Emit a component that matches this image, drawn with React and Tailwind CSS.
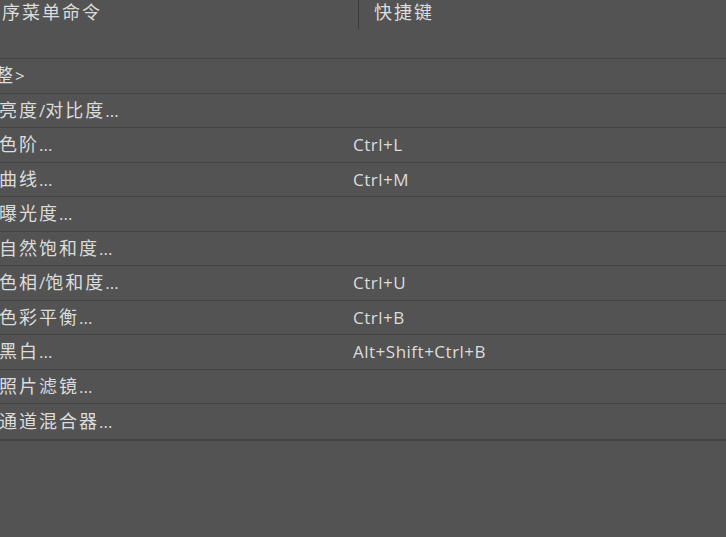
import React from "react";

const rows = [
  { label: "调整>", shortcut: "", group: true },
  { label: "亮度/对比度...", shortcut: "" },
  { label: "色阶...", shortcut: "Ctrl+L" },
  { label: "曲线...", shortcut: "Ctrl+M" },
  { label: "曝光度...", shortcut: "" },
  { label: "自然饱和度...", shortcut: "" },
  { label: "色相/饱和度...", shortcut: "Ctrl+U" },
  { label: "色彩平衡...", shortcut: "Ctrl+B" },
  { label: "黑白...", shortcut: "Alt+Shift+Ctrl+B" },
  { label: "照片滤镜...", shortcut: "" },
  { label: "通道混合器...", shortcut: "" },
];

// CJK runs get wider pitch than latin runs, like the original dialog font
function Label({ text }) {
  const parts = text.split(/([\u4e00-\u9fff]+)/).filter(Boolean);
  return (
    <span className="whitespace-nowrap">
      {parts.map((p, i) =>
        /[\u4e00-\u9fff]/.test(p) ? (
          <span key={i} className="text-[18px] tracking-[2px]">{p}</span>
        ) : (
          <span key={i} className="text-[17px]">{p}</span>
        )
      )}
    </span>
  );
}

export default function App() {
  return (
    <div
      className="w-[726px] h-[537px] overflow-hidden bg-[#535353] text-[#dcdcdc]"
      style={{ fontFamily: '"Open Sans", "Noto Sans CJK SC", sans-serif' }}
    >
      <div className="h-[59px] border-b border-[#444444] flex items-start">
        <div className="w-[359px] h-[29px] border-r border-[#3a3a3a] overflow-hidden">
          <div className="ml-[-18px] leading-[24px]">
            <Label text="程序菜单命令" />
          </div>
        </div>
        <div className="pl-[15px] leading-[24px]">
          <Label text="快捷键" />
        </div>
      </div>

      <div className="border-b-2 border-[#444444]">
        {rows.map((r, i) => (
          <div
            key={i}
            className={`h-[34.5px] flex items-center ${i < rows.length - 1 ? "border-b border-[#444444]" : ""}`}
          >
            <div className="w-[353px] overflow-hidden">
              <div className={r.group ? "ml-[-25px]" : "ml-[-1px]"}>
                <Label text={r.label} />
              </div>
            </div>
            <div className="text-[17px] tracking-[0.5px]">{r.shortcut}</div>
          </div>
        ))}
      </div>
    </div>
  );
}
